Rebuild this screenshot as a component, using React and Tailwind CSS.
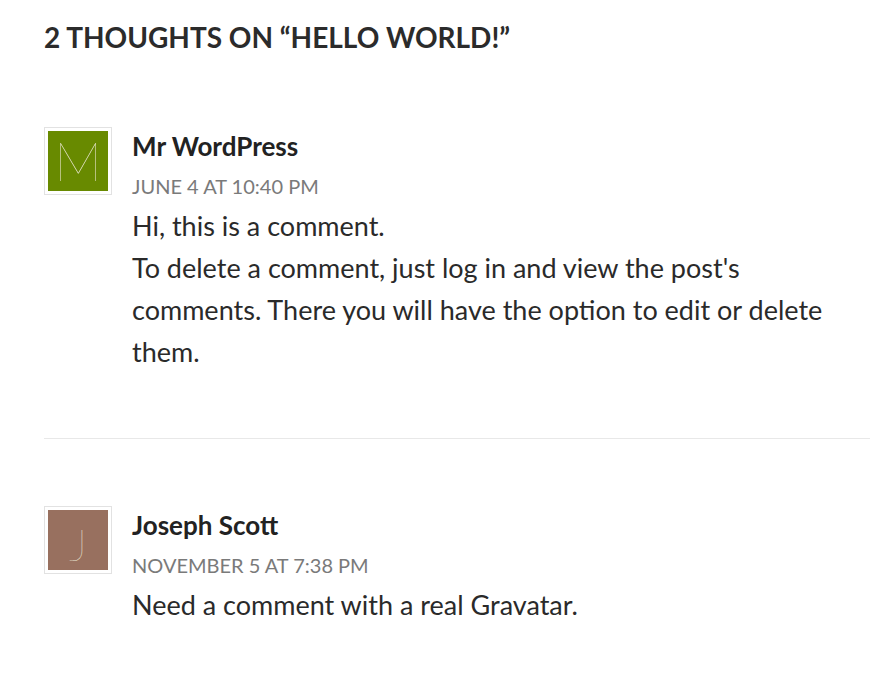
const comments = [
  {
    id: 1,
    author: "Mr WordPress",
    date: "June 4 at 10:40 pm",
    letter: "M",
    letterSize: "text-[54px]",
    bg: "bg-[#688a00]",
    body: ["Hi, this is a comment.", "To delete a comment, just log in and view the post's comments. There you will have the option to edit or delete them."],
  },
  {
    id: 2,
    author: "Joseph Scott",
    date: "November 5 at 7:38 pm",
    letter: "J",
    letterSize: "text-[44px] pt-[8px]",
    bg: "bg-[#98705f]",
    body: ["Need a comment with a real Gravatar."],
  },
];

const Avatar = ({ letter, bg, letterSize }) => (
  <div className="w-[68px] h-[68px] shrink-0 border border-[#e2e2e2] p-[3px] bg-white">
    <div className={`w-full h-full ${bg} flex items-center justify-center text-[#ece8d4] font-thin leading-none ${letterSize}`}>
      {letter}
    </div>
  </div>
);

export default function App() {
  return (
    <div className="min-h-screen bg-white text-[#2a2a2a] pl-[44px] pt-[18px]" style={{ fontFamily: "Lato, 'Open Sans', sans-serif" }}>
      <h2 className="text-[28px] font-bold uppercase leading-[38px] text-[#2b2b2b]">
        2 Thoughts on “Hello World!”
      </h2>
      <ol className="mt-[71px]">
        {comments.map((c, i) => (
          <li key={c.id} className={i > 0 ? "border-t border-[#e8e8e8] pt-[67px]" : "pb-[65px]"}>
            <div className="flex gap-[20px] items-start">
              <Avatar letter={c.letter} bg={c.bg} letterSize={c.letterSize} />
              <div className="pr-[20px] pt-[4px]">
                <div className="text-[26px] font-bold leading-[30px] text-[#222]">{c.author}</div>
                <div className="text-[20px] uppercase text-[#7a7a7a] leading-[28px] mt-[11px]">{c.date}</div>
                <div className="text-[27px] leading-[42px] mt-[5px]">
                  {c.body.map((p) => (
                    <p key={p}>{p}</p>
                  ))}
                </div>
              </div>
            </div>
          </li>
        ))}
      </ol>
    </div>
  );
}
